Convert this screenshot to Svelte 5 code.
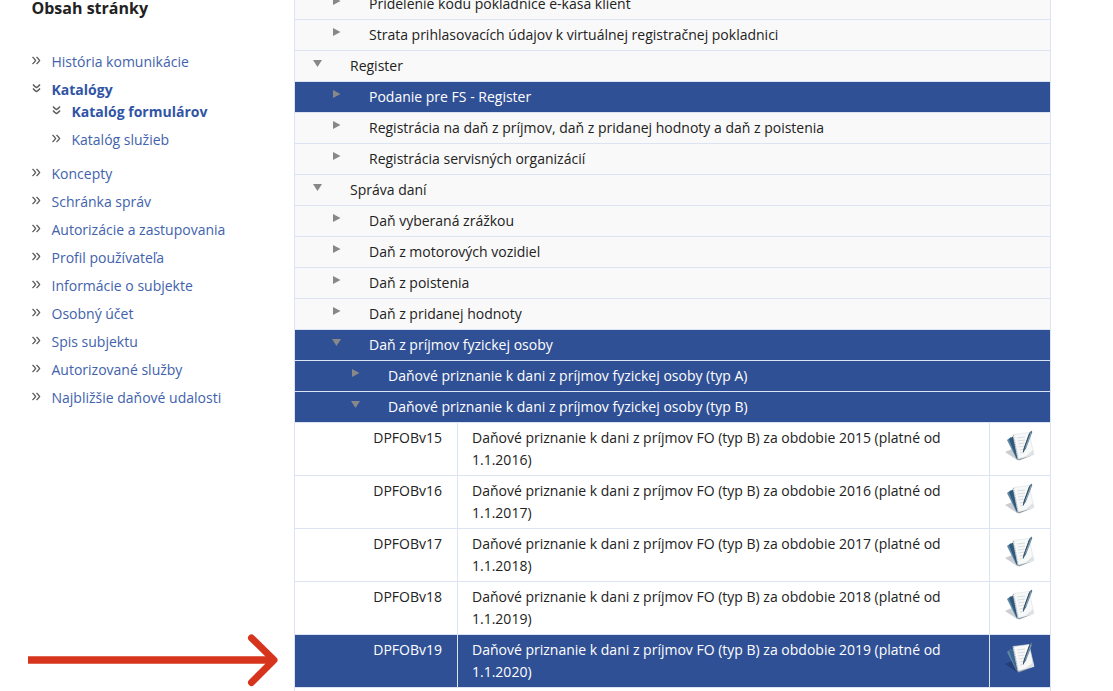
<script>
  const menu = [
    { label: 'História komunikácie' },
    {
      label: 'Katalógy',
      open: true,
      children: [{ label: 'Katalóg formulárov', open: true }, { label: 'Katalóg služieb' }]
    },
    { label: 'Koncepty' },
    { label: 'Schránka správ' },
    { label: 'Autorizácie a zastupovania' },
    { label: 'Profil používateľa' },
    { label: 'Informácie o subjekte' },
    { label: 'Osobný účet' },
    { label: 'Spis subjektu' },
    { label: 'Autorizované služby' },
    { label: 'Najbližšie daňové udalosti' }
  ];

  const tree = [
    { level: 2, label: 'Pridelenie kódu pokladnice e-kasa klient' },
    { level: 2, label: 'Strata prihlasovacích údajov k virtuálnej registračnej pokladnici' },
    { level: 1, label: 'Register', open: true },
    { level: 2, label: 'Podanie pre FS - Register', active: true },
    { level: 2, label: 'Registrácia na daň z príjmov, daň z pridanej hodnoty a daň z poistenia' },
    { level: 2, label: 'Registrácia servisných organizácií' },
    { level: 1, label: 'Správa daní', open: true },
    { level: 2, label: 'Daň vyberaná zrážkou' },
    { level: 2, label: 'Daň z motorových vozidiel' },
    { level: 2, label: 'Daň z poistenia' },
    { level: 2, label: 'Daň z pridanej hodnoty' },
    { level: 2, label: 'Daň z príjmov fyzickej osoby', open: true, active: true },
    { level: 3, label: 'Daňové priznanie k dani z príjmov fyzickej osoby (typ A)', active: true },
    { level: 3, label: 'Daňové priznanie k dani z príjmov fyzickej osoby (typ B)', open: true, active: true }
  ];

  const forms = [2015, 2016, 2017, 2018, 2019].map((year) => ({
    code: `DPFOBv${year - 2000}`,
    year,
    active: year === 2019
  }));
</script>

{#snippet chevrons(open)}
  <svg class="chevrons" class:open width="9" height="9" viewBox="0 0 9 9">
    <path d="M.5 1Q2.800 2.800 3.600 4.500Q2.800 6.200.5 8M4.500 1Q6.800 2.800 7.600 4.500Q6.800 6.200 4.500 8" />
  </svg>
{/snippet}

{#snippet menuList(items)}
  <ul>
    {#each items as item}
      <li class:open={item.open}>
        <a href="#menu">{@render chevrons(item.open)}<span>{item.label}</span></a>
        {#if item.children}{@render menuList(item.children)}{/if}
      </li>
    {/each}
  </ul>
{/snippet}

<div class="page">
  <nav>
    <h2>Obsah stránky</h2>
    {@render menuList(menu)}
  </nav>

  <main>
    {#each tree as row}
      <div class="row level{row.level}" class:active={row.active}>
        <svg class="marker" width="9" height="8" viewBox="0 0 9 8">
          <path d={row.open ? 'M0 1H9L4.5 8Z' : 'M1 0L8.5 4L1 8Z'} />
        </svg>
        <span>{row.label}</span>
      </div>
    {/each}
    {#each forms as form}
      <div class="form" class:active={form.active}>
        <div class="code">{form.code}</div>
        <div class="title">
          Daňové priznanie k dani z príjmov FO (typ B) za obdobie {form.year} (platné od<br />1.1.{form.year + 1})
        </div>
        <div class="action">
          <svg width="32" height="34" viewBox="0 0 32 34">
            <path class="shadow" d="M0 22L7 19L13 29L12 30Z" />
            <path class="back" d="M2 10L6 7L13 29L11 28Z" />
            <path class="cover" d="M4 9L8.500 6L14 29L12 29.500Z" />
            <path d="M12 29L28 25L14 30.500Z" fill="#8b98a2" />
            <path d="M8 4.500L24 2.500L29 24.500L13 29Z" fill="#f7f8f8" stroke="#dde0e2" stroke-width=".6" />
            <path d="M8.500 5L13 28.500" stroke="#a9b2b8" stroke-width="1.300" stroke-dasharray="1 1.300" />
            <path d="M12 8L20 7M12.500 11L20 10M13 14L19.500 13M13.500 17L19 16M14.500 20L18 19.500M15 23L17 22.500" stroke="#d2d6d9" stroke-width=".8" />
            <path d="M28 20L29 24.500L20 27Z" fill="#dfe2e4" />
            <path d="M24.500 2.500L26.500 .500L27.300 2L21 18.500L18.200 22.500L18.800 18.500Z" fill="#54788f" />
            <path d="M26 3L20.500 17.500" stroke="#9cb6c5" stroke-width=".7" />
            <path d="M24.500 3.500L19.200 18L18.200 22.500" fill="none" stroke="#2d465c" stroke-width=".9" />
          </svg>
        </div>
      </div>
    {/each}
  </main>

  <svg class="arrow" width="252" height="54" viewBox="0 0 252 54">
    <path class="shaft" d="M0 27H245" />
    <path class="head" d="M223.500 5L246 27L223.500 49.500" />
  </svg>
</div>

<style>
  :global(body) {
    background: #fff;
  }
  .page {
    position: relative;
    display: flex;
    height: 691px;
    overflow: hidden;
    font: 14px/22px 'Open Sans', sans-serif;
    color: #222;
  }
  nav {
    flex: none;
    width: 294px;
    padding-left: 31.5px;
    box-sizing: border-box;
    white-space: nowrap;
  }
  h2 {
    margin: -3px 0 32px;
    font-size: 16px;
    line-height: 22px;
    font-weight: 700;
  }
  ul {
    margin: 0;
    padding: 0;
    list-style: none;
    display: flex;
    flex-direction: column;
    gap: 6px;
  }
  a {
    display: flex;
    color: #4162ac;
    text-decoration: none;
  }
  li.open > a {
    color: #3154a5;
    font-weight: 700;
  }
  li ul {
    padding: 0 0 6px 20px;
  }
  .chevrons {
    flex: none;
    margin: 5px 11px 0 0;
    fill: none;
    stroke: #5c5c5c;
    stroke-width: 1.4;
  }
  .chevrons.open {
    transform: rotate(90deg);
  }
  main {
    flex: none;
    box-sizing: border-box;
    width: 757px;
    margin-top: -11px;
    border: solid #dce4f3;
    border-width: 0 1px;
  }
  .row {
    display: flex;
    box-sizing: border-box;
    height: 31px;
    padding-top: 4px;
    border-bottom: 1px solid #dce4f3;
    background: #f9f9f9;
  }
  .level1 {
    padding-left: 18px;
  }
  .level2 {
    padding-left: 37px;
  }
  .level3 {
    padding-left: 56px;
  }
  .marker {
    flex: none;
    margin: 4px 28px 0 0;
    fill: #888;
  }
  .form {
    display: grid;
    grid-template-columns: 163px 532px 60px;
    box-sizing: border-box;
    height: 53px;
    border-bottom: 1px solid #dce4f3;
  }
  .code {
    padding: 4px 15px 0 0;
    border-right: 1px solid #dce4f3;
    text-align: right;
  }
  .title {
    padding: 4px 0 0 14px;
    border-right: 1px solid #dce4f3;
    white-space: nowrap;
  }
  .action {
    display: flex;
    padding: 7px 0 0 15px;
  }
  .shadow {
    fill: #66737d;
    opacity: 0.35;
  }
  .back {
    fill: #5d86a5;
  }
  .cover {
    fill: #2f587b;
  }
  .row.active,
  .form.active {
    background: #305095;
    color: #fff;
  }
  .active .shadow {
    fill: #1c3263;
    opacity: 0.6;
  }
  .active .cover {
    fill: #3c6590;
  }
  .arrow {
    position: absolute;
    left: 28px;
    top: 633px;
    fill: none;
    stroke: #d7341d;
  }
  .shaft {
    stroke-width: 7.5;
  }
  .head {
    stroke-width: 7;
    stroke-linecap: round;
    stroke-linejoin: round;
  }
</style>
